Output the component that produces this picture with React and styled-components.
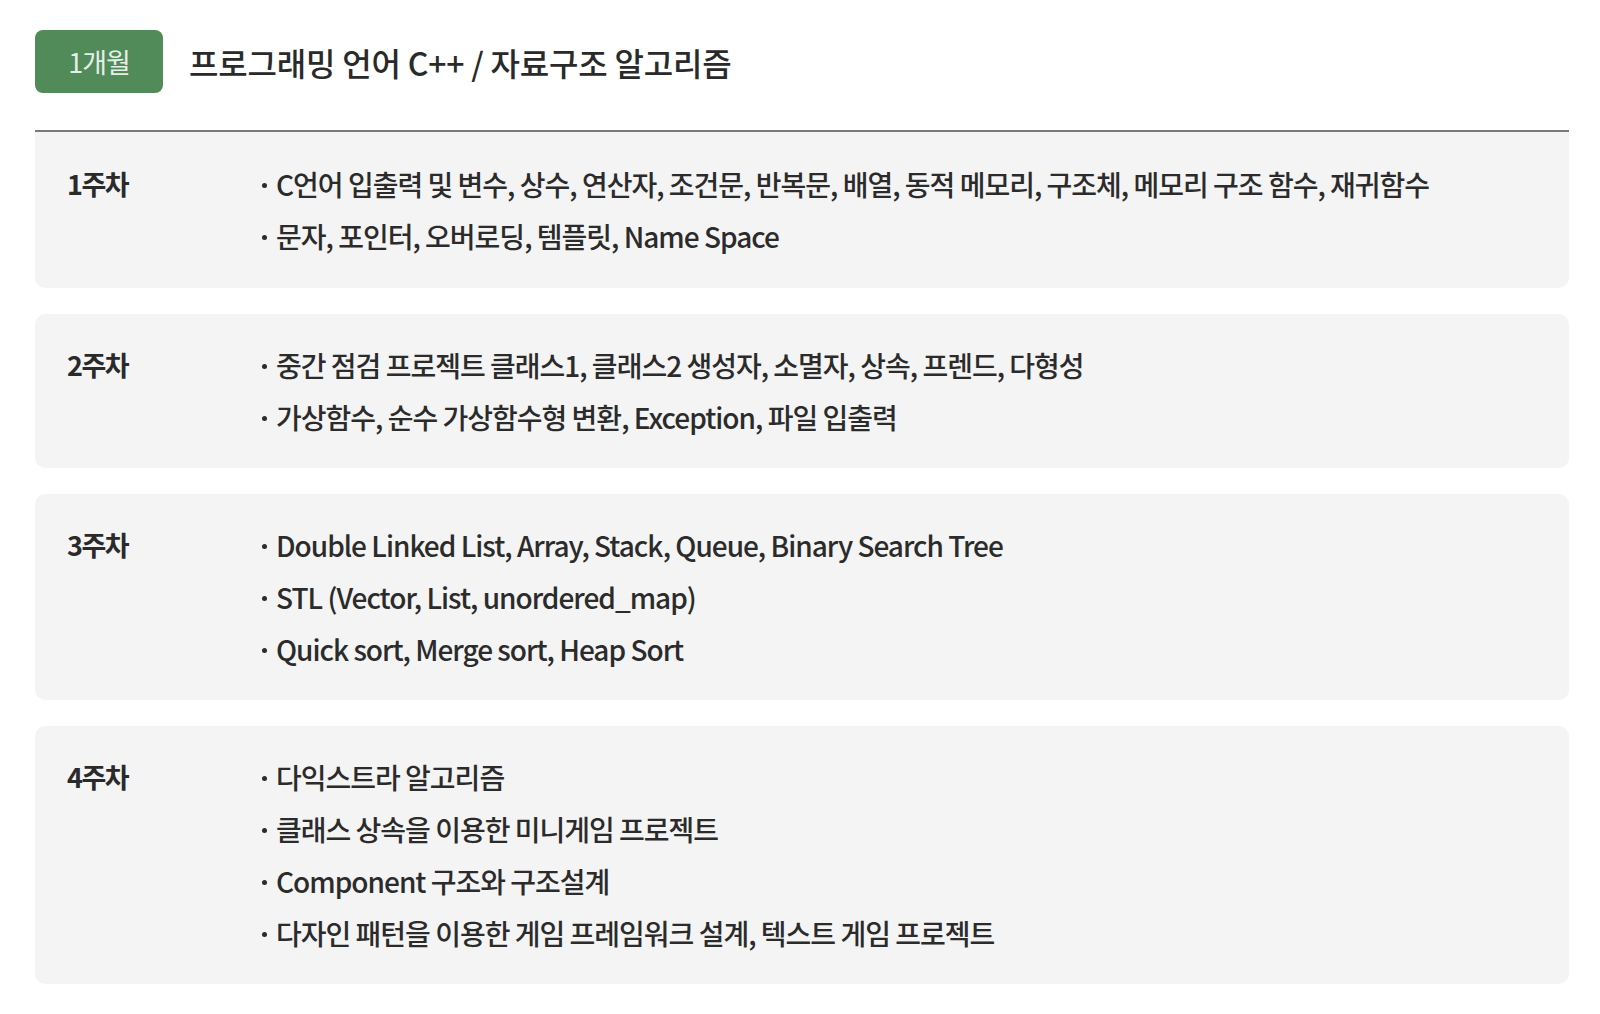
import React from "react";
import styled, { createGlobalStyle } from "styled-components";

const GlobalStyle = createGlobalStyle`
  html, body { margin: 0; padding: 0; background: #ffffff; }
  body { font-family: "Noto Sans CJK KR", "Noto Sans", sans-serif; color: #2b2b2b; }
`;

const Page = styled.div`
  padding: 30px 31px 30px 35px;
`;

const Header = styled.div`
  display: flex;
  align-items: center;
  gap: 26px;
`;

const Badge = styled.div`
  width: 128px;
  height: 63px;
  border-radius: 8px;
  background: #508b59;
  color: #e6efe6;
  display: flex;
  align-items: center;
  justify-content: center;
  font-size: 27px;
  letter-spacing: -1px;
  font-weight: 400;
`;

const Title = styled.h1`
  margin: 0;
  font-size: 32px;
  font-weight: 500;
  letter-spacing: -0.2px;
  color: #2a2a2a;
`;

const Divider = styled.div`
  margin-top: 37px;
  height: 2px;
  background: #7a7a7a;
`;

const Cards = styled.div`
  display: flex;
  flex-direction: column;
  gap: 26px;
`;

const Card = styled.div`
  display: grid;
  grid-template-columns: 196px 1fr;
  padding: ${(p) => (p.$first ? "26px 32px 26px" : "25px 32px 25px")};
  background: #f4f4f4;
  border-radius: ${(p) => (p.$first ? "0 0 10px 10px" : "10px")};
`;

const Week = styled.div`
  font-size: 27px;
  line-height: 52px;
  font-weight: 700;
  letter-spacing: -1.5px;
  color: #2a2a2a;
`;

const List = styled.ul`
  margin: 0;
  padding: 0;
  list-style: none;
`;

const Item = styled.li`
  display: flex;
  align-items: center;
  font-size: 28px;
  line-height: 52px;
  font-weight: 500;
  letter-spacing: -1px;
  color: #2b2b2b;
  &::before {
    content: "";
    width: 5px;
    height: 5px;
    border-radius: 50%;
    background: #2b2b2b;
    margin-right: 9px;
    margin-left: -1px;
    flex: none;
    position: relative;
    top: 1px;
  }
`;

const weeks = [
  {
    label: "1주차",
    items: [
      "C언어 입출력 및 변수, 상수, 연산자, 조건문, 반복문, 배열, 동적 메모리, 구조체, 메모리 구조 함수, 재귀함수",
      "문자, 포인터, 오버로딩, 템플릿, Name Space",
    ],
  },
  {
    label: "2주차",
    items: [
      "중간 점검 프로젝트 클래스1, 클래스2 생성자, 소멸자, 상속, 프렌드, 다형성",
      "가상함수, 순수 가상함수형 변환, Exception, 파일 입출력",
    ],
  },
  {
    label: "3주차",
    items: [
      "Double Linked List, Array, Stack, Queue, Binary Search Tree",
      "STL (Vector, List, unordered_map)",
      "Quick sort, Merge sort, Heap Sort",
    ],
  },
  {
    label: "4주차",
    items: [
      "다익스트라 알고리즘",
      "클래스 상속을 이용한 미니게임 프로젝트",
      "Component 구조와 구조설계",
      "다자인 패턴을 이용한 게임 프레임워크 설계, 텍스트 게임 프로젝트",
    ],
  },
];

export default function App() {
  return (
    <>
      <GlobalStyle />
      <Page>
        <Header>
          <Badge>1개월</Badge>
          <Title>프로그래밍 언어 C++ / 자료구조 알고리즘</Title>
        </Header>
        <Divider />
        <Cards>
          {weeks.map((w, i) => (
            <Card key={w.label} $first={i === 0}>
              <Week>{w.label}</Week>
              <List>
                {w.items.map((t) => (
                  <Item key={t}>{t}</Item>
                ))}
              </List>
            </Card>
          ))}
        </Cards>
      </Page>
    </>
  );
}
